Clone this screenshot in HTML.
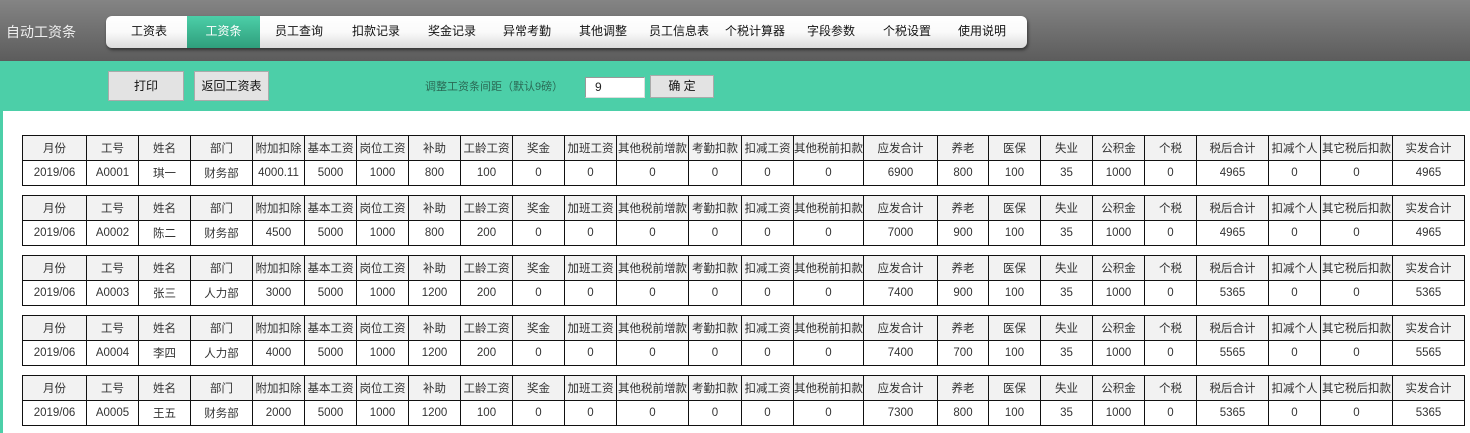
<!DOCTYPE html>
<html><head><meta charset="utf-8"><style>
*{margin:0;padding:0;box-sizing:border-box}
body{width:1470px;height:433px;overflow:hidden;background:#4ccfa8;font-family:"Liberation Sans","Noto Sans CJK SC",sans-serif;font-size:12px;color:#222;position:relative}
.top{position:absolute;left:0;top:0;width:1470px;height:61px;background:linear-gradient(#848484,#5c5c5c)}
.title{position:absolute;left:6px;top:22px;color:#eee;font-size:14px}
.nav{position:absolute;left:106px;top:16px;width:921px;height:32px;border-radius:6px;background:linear-gradient(#fff,#fafafa 50%,#dcdcdc);box-shadow:1px 2px 3px rgba(0,0,0,.5);overflow:hidden}
.nav span{position:absolute;top:0;height:32px;line-height:30px;width:76px;text-align:center;color:#111;font-size:12px}
.nav span.a{background:linear-gradient(#4ccfa8,#2f9e7c);color:#fff;width:73px}
.btn{position:absolute;top:71px;height:30px;background:#e3e3e3;border:1px solid #aaa;line-height:28px;text-align:center;font-size:12px;color:#111}
.lbl{position:absolute;left:425px;top:78px;color:#2a6a55;font-size:11px}
.inp{position:absolute;left:585px;top:77px;width:60px;height:21px;background:#fff;border:1px solid #999;border-right-color:#ddd;border-bottom-color:#ddd;padding-left:9px;line-height:19px;font-size:12px}
.content{position:absolute;left:3px;top:111px;width:1467px;height:322px;background:#fff}
table{position:absolute;left:22px;border-collapse:collapse;table-layout:fixed;width:1443px}
td{border:1px solid #111;height:25px;text-align:center;font-size:11.5px;white-space:nowrap;overflow:hidden;color:#333;padding:0}
tr.h td{background:#f2f2f2}
</style></head><body>
<div class="top"><div class="title">自动工资条</div>
<div class="nav">
<span style="left:5px">工资表</span><span class="a" style="left:81px">工资条</span><span style="left:155px">员工查询</span><span style="left:232px">扣款记录</span><span style="left:308px">奖金记录</span><span style="left:383px">异常考勤</span><span style="left:459px">其他调整</span><span style="left:535px">员工信息表</span><span style="left:611px">个税计算器</span><span style="left:687px">字段参数</span><span style="left:763px">个税设置</span><span style="left:838px">使用说明</span>
</div></div>
<div class="btn" style="left:108px;width:76px">打印</div>
<div class="btn" style="left:194px;width:75px">返回工资表</div>
<div class="lbl">调整工资条间距（默认9磅）</div>
<div class="inp">9</div>
<div class="btn" style="left:650px;top:75px;width:64px;height:23px;line-height:21px">确 定</div>
<div class="content"></div>
<div id="t"></div>
<script>
var w=[64,52,52,62,52,52,52,52,52,52,52,72,53,52,70,74,51,52,52,52,52,72,52,72,72];
var h=["月份","工号","姓名","部门","附加扣除","基本工资","岗位工资","补助","工龄工资","奖金","加班工资","其他税前增款","考勤扣款","扣减工资","其他税前扣款","应发合计","养老","医保","失业","公积金","个税","税后合计","扣减个人","其它税后扣款","实发合计"];
var d=[["A0001","琪一","财务部","4000.11","5000","1000","800","100","6900","800","4965"],
["A0002","陈二","财务部","4500","5000","1000","800","200","7000","900","4965"],
["A0003","张三","人力部","3000","5000","1000","1200","200","7400","900","5365"],
["A0004","李四","人力部","4000","5000","1000","1200","200","7400","700","5565"],
["A0005","王五","财务部","2000","5000","1000","1200","100","7300","800","5365"]];
var s="";
for(var i=0;i<5;i++){var r=d[i];
var v=["2019/06",r[0],r[1],r[2],r[3],r[4],r[5],r[6],r[7],"0","0","0","0","0","0",r[8],r[9],"100","35","1000","0",r[10],"0","0",r[10]];
s+='<table style="top:'+(135+60*i)+'px"><colgroup>';
for(var j=0;j<25;j++)s+='<col style="width:'+w[j]+'px">';
s+='</colgroup><tr class="h">';
for(j=0;j<25;j++)s+='<td>'+h[j]+'</td>';
s+='</tr><tr>';
for(j=0;j<25;j++)s+='<td>'+v[j]+'</td>';
s+='</tr></table>';}
document.getElementById("t").innerHTML=s;
</script>
</body></html>
